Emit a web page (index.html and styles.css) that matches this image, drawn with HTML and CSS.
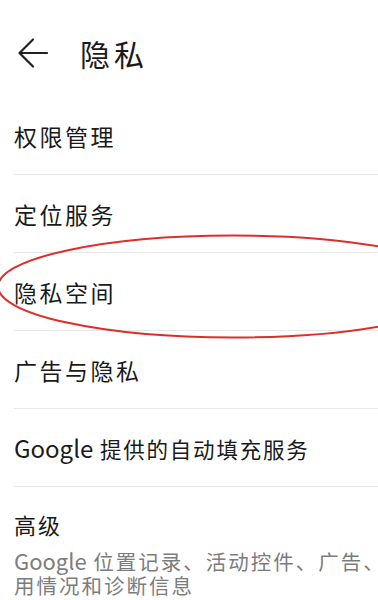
FILE: index.html
```html
<!DOCTYPE html>
<html lang="zh-CN">
<head>
<meta charset="utf-8">
<title>隐私</title>
<link rel="stylesheet" href="styles.css">
</head>
<body>
<div class="page">
  <header class="header">
    <svg class="back" width="30" height="30" viewBox="0 0 30 30">
      <path d="M29 15 H2 M15 1.5 L1.5 15 L15 28.5" fill="none" stroke="#222" stroke-width="2.2" stroke-linecap="round" stroke-linejoin="round"/>
    </svg>
    <h1 class="title">隐私</h1>
  </header>
  <ul class="list">
    <li class="row">权限管理</li>
    <li class="row">定位服务</li>
    <li class="row">隐私空间</li>
    <li class="row">广告与隐私</li>
    <li class="row row-mixed"><span class="label"><span class="latin">Google</span> 提供的自动填充服务</span></li>
    <li class="row-adv">
      <div class="adv-title">高级</div>
      <div class="adv-sub">
        <span class="line"><span class="latin-sub">Google</span> 位置记录、活动控件、广告、</span>
        <span class="line">用情况和诊断信息</span>
      </div>
    </li>
  </ul>
  <svg class="mark" width="378" height="600" viewBox="0 0 378 600">
    <ellipse cx="233" cy="286.5" rx="235" ry="51" fill="none" stroke="#dc2f2a" stroke-width="2"/>
  </svg>
</div>
</body>
</html>
```
FILE: styles.css
```css
html, body {
  margin: 0;
  padding: 0;
  background: #ffffff;
}
body {
  width: 378px;
  height: 600px;
  overflow: hidden;
  font-family: "Noto Sans CJK SC", "Noto Sans", sans-serif;
  color: #1a1a1a;
}
.page {
  position: relative;
  width: 378px;
  height: 600px;
  overflow: hidden;
}
.header {
  height: 97px;
  display: flex;
  align-items: center;
  padding-left: 18px;
  padding-top: 9px;
  box-sizing: border-box;
}
.back {
  display: block;
  flex: none;
}
.title {
  margin: 0 0 0 32px;
  font-size: 30px;
  font-weight: 400;
  letter-spacing: 4px;
  line-height: 36px;
  color: #1a1a1a;
}
.list {
  list-style: none;
  margin: 0;
  padding: 0;
}
.row {
  height: 77px;
  margin-left: 14px;
  border-bottom: 1px solid #e8e8e8;
  display: flex;
  align-items: center;
  font-size: 23px;
  letter-spacing: 2.5px;
  white-space: nowrap;
}
.row-mixed {
  font-size: 21.5px;
  letter-spacing: 1.8px;
}
.latin {
  font-size: 24px;
  letter-spacing: 0;
}
.row-adv {
  margin-left: 14px;
  padding-top: 22px;
}
.adv-title {
  font-size: 22px;
  line-height: 30px;
  letter-spacing: 2px;
}
.adv-sub {
  margin-top: 9px;
  font-size: 20.5px;
  line-height: 24px;
  letter-spacing: 2px;
  color: #7c7c7c;
}
.line {
  display: block;
  white-space: nowrap;
}
.latin-sub {
  font-size: 22px;
  letter-spacing: 0;
}
.mark {
  position: absolute;
  left: 0;
  top: 0;
  pointer-events: none;
}
```
